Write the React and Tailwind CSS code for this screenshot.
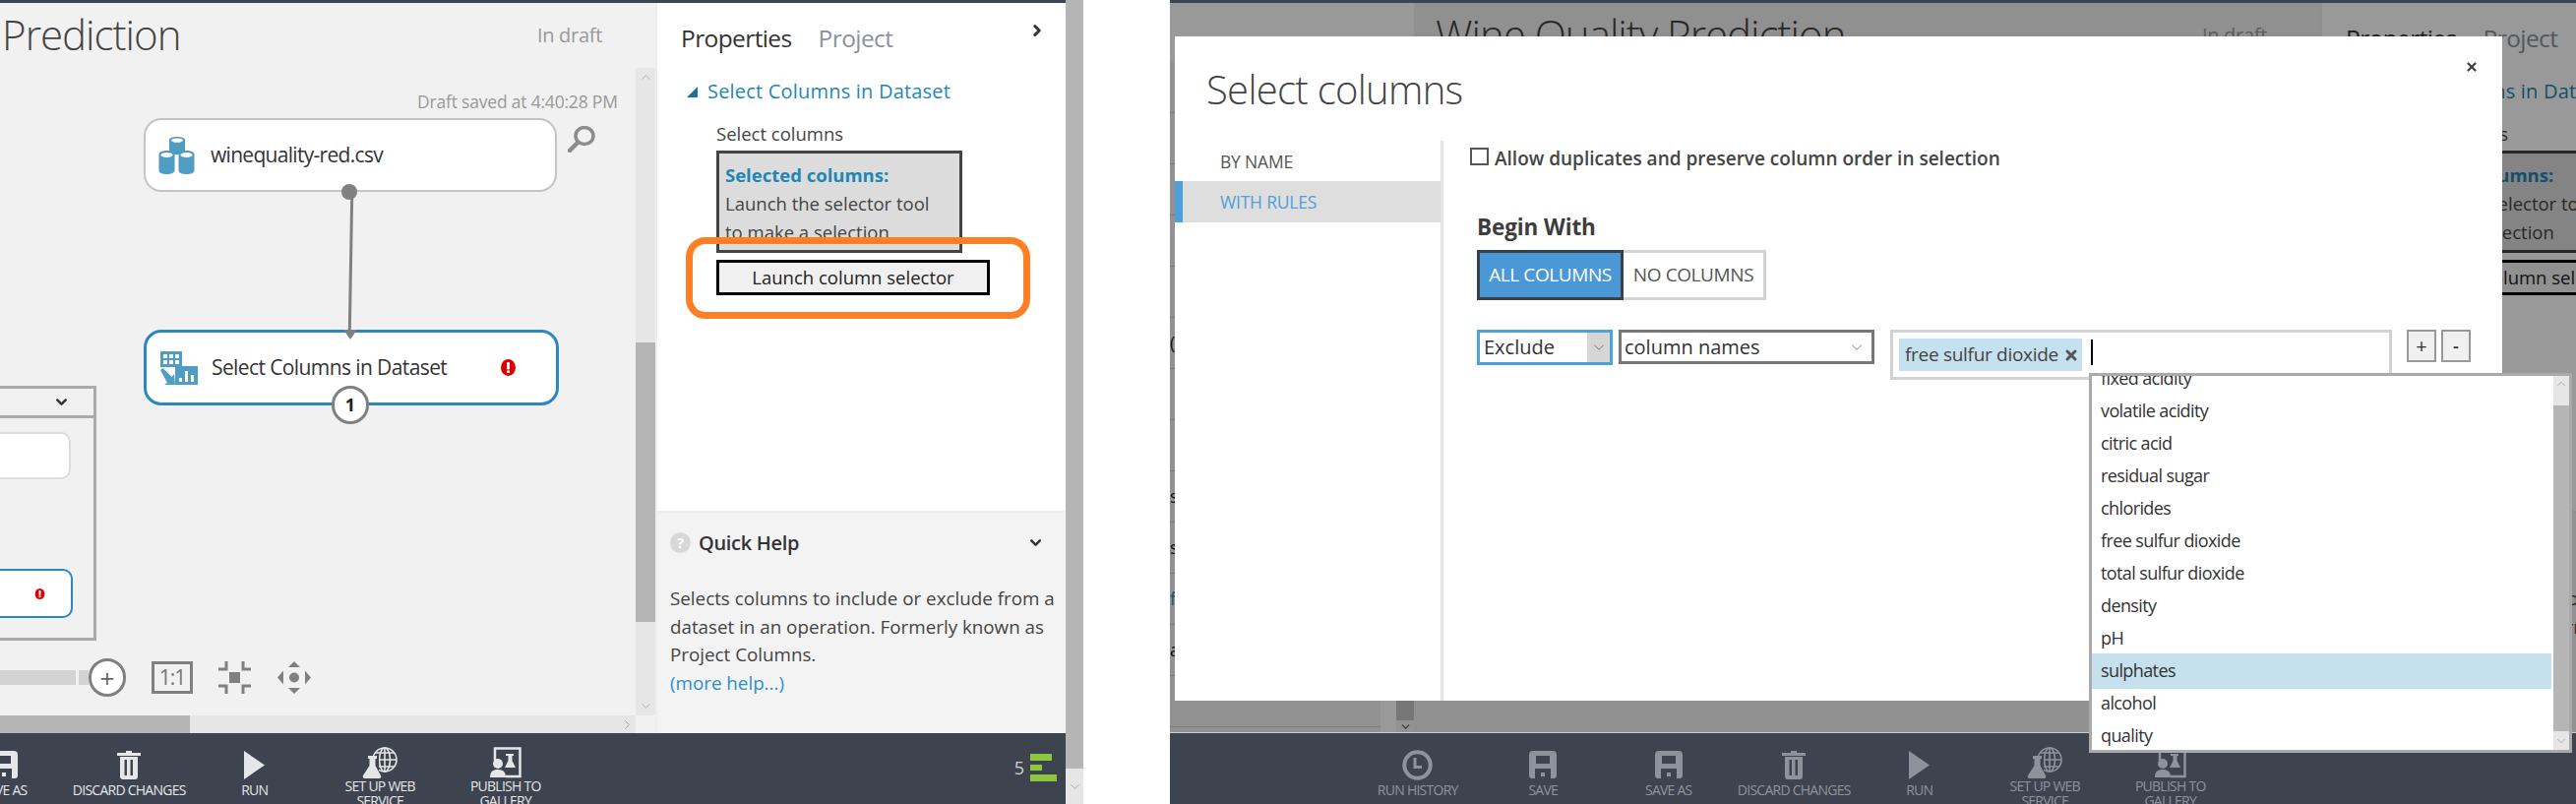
import { ChevronDown, ChevronUp, ChevronRight, X } from "lucide-react";

const paletteRows = [
  { t: "" }, { t: "" }, { t: "" }, { t: "" }, { t: "", }, { t: "(" }, { t: "" }, { t: "" },
  { t: "s" }, { t: "s" }, { t: "f", blue: true }, { t: "a" }, { t: "" },
];

const columns = ["fixed acidity", "volatile acidity", "citric acid", "residual sugar", "chlorides", "free sulfur dioxide", "total sulfur dioxide", "density", "pH", "sulphates", "alcohol", "quality"];

function DatasetIcon() {
  const cyl = (x, y) => (
    <g transform={`translate(${x} ${y})`}>
      <path d="M0 4v16c0 3 4 4 8 4s8-1 8-4V4C16 1 12 0 8 0S0 1 0 4z" fill="#4f9dc2" />
      <ellipse cx="8" cy="4.5" rx="6" ry="2.6" fill="#fff" />
    </g>
  );
  return (
    <svg width="38" height="38" viewBox="0 0 38 38">
      <path d="M11 3v12c0 2 4 3 8 3s8-1 8-3V3c0-2-4-3-8-3s-8 1-8 3z" fill="#4f9dc2" />
      <ellipse cx="19" cy="3.6" rx="6" ry="2.2" fill="#fff" />
      {cyl(0.5, 14)}{cyl(20.5, 14)}
    </svg>
  );
}

function SelectIcon() {
  return (
    <svg width="38" height="34" viewBox="0 0 38 34">
      <rect x="0" y="0" width="22" height="16" fill="#4f9dc2" />
      <g fill="#fff">
        <rect x="3" y="3" width="4" height="4" /><rect x="9" y="3" width="4" height="4" /><rect x="15" y="3" width="4" height="4" />
        <rect x="3" y="9" width="4" height="4" /><rect x="9" y="9" width="4" height="4" /><rect x="15" y="9" width="4" height="4" />
      </g>
      <path d="M0 19l2.500-2 9 9 2.500-3 1 11H4l3-2z" fill="#4f9dc2" />
      <rect x="15" y="15" width="23" height="19" fill="#4f9dc2" />
      <g fill="#fff">
        <rect x="19" y="27" width="3" height="4" /><rect x="25" y="20" width="3" height="11" /><rect x="31" y="24" width="3" height="7" />
      </g>
    </svg>
  );
}

function AlertIcon({ w = 17, h = 17 }) {
  return (
    <svg width={w} height={h} viewBox="0 0 17 17">
      <ellipse cx="8.5" cy="8.5" rx="7.5" ry="8.5" fill="#e00000" />
      <rect x="7" y="3" width="3" height="7.5" rx="1" fill="#fff" />
      <rect x="7" y="11.5" width="3" height="2.5" fill="#fff" />
    </svg>
  );
}

function ClockIcon() {
  return (
    <svg width="31" height="31" viewBox="0 0 31 31" fill="none" stroke="currentColor">
      <circle cx="15.5" cy="15.5" r="13.2" strokeWidth="4" />
      <path d="M13 8v9.5h7" strokeWidth="3" />
    </svg>
  );
}

function SaveIcon() {
  return (
    <svg width="28" height="28" viewBox="0 0 28 28">
      <path fillRule="evenodd" fill="currentColor" d="M4 0h20a4 4 0 0 1 4 4v21a3 3 0 0 1-3 3H3a3 3 0 0 1-3-3V4a4 4 0 0 1 4-4zM7 5v8h14V5zM6 18v10h16V18z" />
      <rect x="12" y="22" width="4" height="4" fill="currentColor" />
    </svg>
  );
}

function TrashIcon() {
  return (
    <svg width="24" height="29" viewBox="0 0 24 29">
      <path fill="currentColor" d="M9 0h6v2h9v3H0V2h9z" />
      <path fillRule="evenodd" fill="currentColor" d="M3 6h18v20a3 3 0 0 1-3 3H6a3 3 0 0 1-3-3zM7.500 9v16h2.500V9zM13.500 9v16H16V9z" />
    </svg>
  );
}

function PlayIcon() {
  return (
    <svg width="21" height="29" viewBox="0 0 21 29"><path fill="currentColor" d="M0 0l21 14.500L0 29z" /></svg>
  );
}

function WebIcon() {
  return (
    <svg width="36" height="32" viewBox="0 0 36 32">
      <g fill="none" stroke="currentColor" strokeWidth="1.600">
        <circle cx="23" cy="13" r="12" />
        <ellipse cx="23" cy="13" rx="5.500" ry="12" />
        <path d="M23 1v24M11 13h24M13 6h20M13 20h20" />
      </g>
      <path fill="#3d4450" d="M0 10h17v22H0z" />
      <path fill="currentColor" d="M6 9h9v3h-1.500v7L19 29a2 2 0 0 1-2 3H3a2 2 0 0 1-2-3l6.500-10v-7H6z" />
    </svg>
  );
}

function PublishIcon() {
  return (
    <svg width="32" height="32" viewBox="0 0 32 32">
      <path fill="none" stroke="currentColor" strokeWidth="2.500" d="M5 14V1.500h25.500v28.500H16" />
      <path fill="currentColor" d="M16 7h8v2h-1.500v5l3.500 7H15l3.500-7V9H16z" />
      <circle cx="8" cy="17" r="5" fill="currentColor" />
      <path fill="currentColor" d="M0 31c0-6 3-8 8-8s8 2 8 8z" />
    </svg>
  );
}

function FitIcon() {
  return (
    <svg width="33" height="33" viewBox="0 0 33 33" fill="none" stroke="#808080" strokeWidth="3">
      <path d="M8 0v8H0M25 0v8h8M8 33v-8H0M25 33v-8h8" />
      <rect x="11" y="11" width="11" height="11" fill="#808080" stroke="none" />
    </svg>
  );
}

function PanIcon() {
  return (
    <svg width="34" height="33" viewBox="0 0 34 33" fill="#808080">
      <path d="M17 0l6 6H11zM17 33l-6-6h12zM0 16.500l6-7v14zM34 16.500l-6-7v14z" />
      <circle cx="17" cy="16.500" r="5" />
    </svg>
  );
}

function ToolButton({ label, children }) {
  return (
    <div className="w-[127.5px] shrink-0 flex flex-col items-center">
      <div className="h-[36px] flex items-center justify-center">{children}</div>
      <p className="text-[14px] leading-[15px] text-center whitespace-pre-line tracking-[-0.75px]">{label}</p>
    </div>
  );
}

function Workspace({ dim }) {
  return (
    <div className="flex w-[1604px] h-[817px] shrink-0">
      <div className="w-[1586px] flex flex-col">
        <div className="h-[3px] bg-[#3d4450]" />

        <div className="flex-1 flex min-h-0">
          {/* module palette */}
          <div className="w-[248px] flex flex-col">
            <div className="h-[60px] shrink-0 bg-white" />
            <div className="flex-1 flex min-h-0 bg-[#f3f3f3]">
              <div className="w-[214px] flex flex-col overflow-hidden text-[18px] text-[#222]">
                {paletteRows.map((r, i) => (
                  <div key={i} className={`h-[52px] shrink-0 border-b border-[#cfcfcf] flex items-center ${r.blue ? "text-[#1f87b3]" : ""}`}>{r.t}</div>
                ))}
              </div>
              <div className="flex-1 bg-white flex">
                <div className="w-[16px]" />
                <div className="flex-1 flex flex-col bg-[#f3f3f3]">
                  <div className="flex-1 bg-[#c6c6c6]" />
                  <div className="h-[13px] flex items-center justify-center"><ChevronDown size={13} className="text-[#555]" /></div>
                </div>
              </div>
            </div>
          </div>

          {/* experiment canvas */}
          <div className="w-[921px] flex flex-col bg-[#f1f1f1]">
            <div className="h-[66px] flex items-start justify-between pl-[22px] pr-[54px] shrink-0">
              <h1 className="text-[42px] leading-[48px] mt-[8px] font-light text-[#444] whitespace-nowrap tracking-[-1px]">Wine Quality Prediction</h1>
              <span className="text-[20px] mt-[18px] text-[#999] tracking-[-0.3px]">In draft</span>
            </div>
            <div className="flex-1 flex min-h-0">
              <div className="w-[901px] relative overflow-hidden">
                <p className="absolute left-[679px] top-[21px] text-[17.5px] text-[#999] whitespace-nowrap tracking-[-0.2px]">Draft saved at 4:40:28 PM</p>

                <div className="absolute left-[401px] top-[51px] w-[420px] h-[75px] bg-white border-2 border-[#c4c4c4] rounded-[18px] flex items-center pl-[13px]">
                  <DatasetIcon />
                  <span className="ml-[15px] text-[21px] text-[#333] tracking-[-0.7px]">winequality-red.csv</span>
                </div>
                <svg className="absolute left-[832px] top-[59px]" width="28" height="27" viewBox="0 0 28 27" fill="none" stroke="#8c8c8c">
                  <ellipse cx="17" cy="10" rx="9" ry="8.500" strokeWidth="3.500" />
                  <path d="M10 17L2 25" strokeWidth="4.500" strokeLinecap="round" />
                </svg>

                <div className="absolute left-[610px] top-[126px] w-[3px] h-[145px] bg-[#808080] rotate-[1deg]" />
                <div className="absolute left-[610px] top-[118px] w-[16px] h-[16px] -ml-[8px] rounded-full bg-[#808080]" />

                <div className="absolute left-[401px] top-[266px] w-[422px] h-[77px] bg-white border-[3px] border-[#2a87c1] rounded-[18px] flex items-center pl-[14px] pr-[40px]">
                  <SelectIcon />
                  <span className="ml-[14px] text-[21px] text-[#333] whitespace-nowrap tracking-[-0.6px]">Select Columns in Dataset</span>
                  <div className="ml-auto"><AlertIcon /></div>
                </div>
                <svg className="absolute left-[604px] top-[266px]" width="14" height="10" viewBox="0 0 14 10"><path d="M0 0h14L7 10z" fill="#808080" /></svg>
                <div className="absolute left-[592px] top-[323px] w-[38px] h-[39px] rounded-full bg-white border-[3px] border-[#808080] flex items-center justify-center text-[18px] font-bold text-[#222]">1</div>

                {/* collapsed group */}
                <div className="absolute left-[205px] top-[323px] w-[148px] h-[259px] border-[3px] border-[#aaaaaa]">
                  <div className="h-[30px] border-b-[3px] border-[#aaaaaa] flex items-center justify-end pr-[24px]">
                    <ChevronDown size={17} strokeWidth={3.5} className="text-[#333]" />
                  </div>
                  <div className="absolute right-[23px] top-[44px] w-[100px] h-[48px] bg-white border-2 border-[#dddddd] rounded-[10px]" />
                  <div className="absolute right-[21px] top-[183px] w-[110px] h-[50px] bg-white border-2 border-[#2a87c1] rounded-[10px] flex items-center justify-end pr-[26px]">
                    <AlertIcon w={11} h={13} />
                  </div>
                </div>

                {/* zoom controls */}
                <div className="absolute left-[205px] top-[612px] w-[127px] h-[15px] bg-[#d3d3d3]" />
                <div className="absolute left-[335px] top-[612px] w-[10px] h-[15px] bg-[#d3d3d3]" />
                <div className="absolute left-[345px] top-[600px] w-[38px] h-[39px] rounded-full bg-white border-[3px] border-[#808080] flex items-center justify-center text-[26px] leading-none text-[#666]">+</div>
                <div className="absolute left-[409px] top-[603px] w-[42px] h-[33px] border-[3px] border-[#808080] flex items-center justify-center text-[21px] tracking-[-1px] text-[#777]">1:1</div>
                <div className="absolute left-[477px] top-[603px]"><FitIcon /></div>
                <div className="absolute left-[537px] top-[603px]"><PanIcon /></div>
              </div>
              <div className="w-[20px] bg-[#e6e6e6] flex flex-col relative">
                <ChevronUp size={15} strokeWidth={1} className="text-[#999] mx-auto mt-[2px]" />
                <div className="h-[279px] shrink-0 -mt-[17px]" />
                <div className="h-[284px] bg-[#b5b5b5]" />
                <div className="flex-1" />
                <ChevronDown size={15} strokeWidth={1} className="text-[#999] mx-auto mb-[2px]" />
              </div>
            </div>
            <div className="h-[18px] shrink-0 flex items-center">
              {!dim && (
                <div className="flex w-[901px] h-full bg-[#e6e6e6] items-center">
                  <div className="w-[448px] h-full bg-[#b5b5b5]" />
                  <div className="flex-1" />
                  <ChevronRight size={15} strokeWidth={1} className="text-[#777] mr-[1px]" />
                </div>
              )}
            </div>
          </div>

          {/* properties */}
          <div className="w-[417px] flex flex-col bg-white border-l-2 border-[#eeeeee]">
            <div className="flex-1 relative pl-[24px] pt-[21px]">
              <div className="flex items-start justify-between pr-[20px]">
                <div className="flex gap-[27px] text-[24.5px] leading-[30px] tracking-[-0.6px]">
                  <span className="text-[#333]">Properties</span>
                  <span className="text-[#8a929a]">Project</span>
                </div>
                <ChevronRight size={18} strokeWidth={4} className="text-[#333] mt-[-2px]" />
              </div>
              <div className="flex items-center mt-[26px] pl-[6px]">
                <svg width="11" height="11" viewBox="0 0 11 11"><path d="M11 0v11H0z" fill="#1f6f98" /></svg>
                <span className="ml-[10px] text-[20px] leading-[26px] text-[#1f87b3] whitespace-nowrap tracking-[0.2px]">Select Columns in Dataset</span>
              </div>
              <p className="ml-[36px] mt-[18px] text-[18.5px] leading-[24px] text-[#444]">Select columns</p>
              <div className="ml-[36px] mt-[5px] w-[250px] h-[104px] border-[3px] border-[#444] bg-[#dcdcdc] px-[6px] pt-[7px] text-[18.5px] leading-[29px] text-[#444] overflow-hidden whitespace-nowrap">
                <p className="font-bold text-[#1f87b3]">Selected columns:</p>
                <p>Launch the selector tool</p>
                <p>to make a selection</p>
              </div>
              <div className="ml-[36px] mt-[7px] w-[278px] h-[36px] border-[3px] border-black bg-[#f0f0f0] flex items-center justify-center text-[18.5px] text-[#222]">
                Launch column selector
              </div>
              {!dim && <div className="absolute left-[29px] top-[238px] w-[350px] h-[83px] border-[7px] border-[#ff7f27] rounded-[20px]" />}
            </div>
            <div className="h-[226px] shrink-0 bg-[#f3f3f3] border-t-2 border-[#eeeeee] pl-[13px] pr-[4px] pt-[17px]">
              <div className="flex items-center h-[27px]">
                <span className="w-[21px] h-[21px] rounded-full bg-[#d8d8d8] flex items-center justify-center text-white text-[15px] font-bold">?</span>
                <span className="ml-[8px] text-[20px] font-semibold text-[#333] tracking-[-0.3px]">Quick Help</span>
                <div className="flex-1" />
                <ChevronDown size={17} strokeWidth={3.5} className="text-[#333] mr-[18px]" />
              </div>
              <p className="mt-[29px] text-[18.8px] leading-[28.6px] text-[#444]">
                Selects columns to include or exclude from a dataset in an operation. Formerly known as Project Columns.
              </p>
              <a className="block text-[18.8px] leading-[28.6px] text-[#2a8fca]">(more help...)</a>
            </div>
          </div>
        </div>

        {/* command bar */}
        <div className={`h-[72px] shrink-0 bg-[#3d4450] flex pl-[188px] pt-[14px] relative overflow-hidden ${dim ? "text-[#8d939b]" : "text-[#e4e6e8]"}`}>
          <ToolButton label="RUN HISTORY"><ClockIcon /></ToolButton>
          <ToolButton label="SAVE"><SaveIcon /></ToolButton>
          <ToolButton label="SAVE AS"><SaveIcon /></ToolButton>
          <ToolButton label="DISCARD CHANGES"><TrashIcon /></ToolButton>
          <ToolButton label="RUN"><PlayIcon /></ToolButton>
          <ToolButton label={"SET UP WEB\nSERVICE"}><WebIcon /></ToolButton>
          <ToolButton label={"PUBLISH TO\nGALLERY"}><PublishIcon /></ToolButton>
          <div className="flex-1" />
          <div className="flex items-center mr-[9px] mb-[16px] gap-[6px]">
            <span className="text-[18px] text-[#d0d0d0]">5</span>
            <div className="w-[27px] flex flex-col gap-[4px]">
              <div className="h-[6.5px] w-[22px] bg-[#8cc63f]" />
              <div className="h-[6.5px] w-[12px] bg-[#8cc63f]" />
              <div className="h-[6.5px] w-[27px] bg-[#8cc63f]" />
            </div>
          </div>
        </div>
      </div>

      {/* browser scrollbar */}
      <div className="w-[18px] flex flex-col bg-[#e6e6e6]">
        <div className="h-[781px] bg-[#b5b5b5]" />
        <div className="flex-1 flex items-center justify-center"><ChevronDown size={15} strokeWidth={1} className="text-[#888]" /></div>
      </div>
    </div>
  );
}

function SelectColumnsDialog() {
  return (
    <div className="absolute left-[5px] top-[37px] w-[1349px] h-[675px] bg-white flex flex-col text-[#444]">
      <div className="h-[106px] shrink-0 pl-[32px] pt-[29px] flex items-start justify-between pr-[24px]">
        <h2 className="text-[40px] leading-[50px] font-light text-[#444] tracking-[-0.7px]">Select columns</h2>
        <X size={14} strokeWidth={4} className="text-[#444] mt-[-5px]" />
      </div>
      <div className="flex-1 flex min-h-0">
        <div className="w-[273px] shrink-0 border-r-[3px] border-[#e3e3e3] pt-[2px]">
          <div className="h-[39px] flex items-center pl-[46px] text-[17.5px] text-[#555] tracking-[-0.2px]">BY NAME</div>
          <div className="h-[42px] bg-[#dedede] border-l-[8px] border-[#4f9fd8] flex items-center pl-[38px] text-[17.5px] text-[#4f9fd8] tracking-[-0.2px]">WITH RULES</div>
        </div>
        <div className="flex-1 pl-[27px] pt-[7px] relative">
          <div className="flex items-start h-[18px]">
            <span className="w-[19px] h-[18px] border-2 border-[#555] bg-white" />
            <span className="ml-[6px] text-[19px] leading-[22px] font-semibold text-[#444] whitespace-nowrap">Allow duplicates and preserve column order in selection</span>
          </div>
          <h3 className="ml-[7px] mt-[48px] text-[22.5px] leading-[30px] font-bold text-[#3d3d3d] tracking-[-0.1px]">Begin With</h3>
          <div className="flex ml-[7px] mt-[8px] h-[51px]">
            <div className="w-[149px] bg-[#4a98d6] border-[3px] border-[#3a4048] flex items-center justify-center text-[19px] text-white tracking-[-0.4px]">ALL COLUMNS</div>
            <div className="w-[145px] border-[3px] border-l-0 border-[#d2d2d2] flex items-center justify-center text-[19px] text-[#555] tracking-[-0.4px]">NO COLUMNS</div>
          </div>
          <div className="flex items-start ml-[7px] mt-[30px] gap-[6px]">
            <div className="w-[138px] h-[36px] border-[3px] border-[#4ba3dc] flex items-center justify-between pl-[4px] text-[20px] text-[#333]">
              Exclude
              <span className="w-[23px] h-full bg-[#d6d6d6] flex items-center justify-center"><ChevronDown size={18} strokeWidth={1} className="text-[#555]" /></span>
            </div>
            <div className="w-[260px] h-[35px] border-[3px] border-[#777] flex items-center justify-between pl-[3px] pr-[6px] text-[20px] text-[#333]">
              column names
              <ChevronDown size={18} strokeWidth={1} className="text-[#555]" />
            </div>
            <div className="ml-[10px] w-[510px] h-[51px] border-[3px] border-[#d2d2d2] flex items-start pl-[6px] pt-[6px]">
              <div className="w-[186px] h-[33px] bg-[#c5e0ee] flex items-center pl-[6px] text-[19px] text-[#444] tracking-[-0.3px] whitespace-nowrap">
                free sulfur dioxide
                <X size={16} strokeWidth={4.5} className="ml-[5px] text-[#555]" />
              </div>
              <span className="ml-[9px] mt-[1px] w-[2px] h-[26px] bg-black" />
            </div>
            <div className="ml-[9px] w-[30px] h-[33px] border-2 border-[#999] bg-[#f0f0f0] flex items-center justify-center text-[20px] text-[#333]">+</div>
            <div className="-ml-[1px] w-[30px] h-[33px] border-2 border-[#999] bg-[#f0f0f0] flex items-center justify-center text-[18px] font-semibold text-[#333]">-</div>
          </div>
        </div>
      </div>
    </div>
  );
}

function ColumnDropdown() {
  return (
    <div className="absolute left-[934px] top-[379px] w-[491px] h-[386px] bg-white border-[3px] border-[#aaaaaa] flex z-10">
      <div className="flex-1 overflow-hidden">
        <div className="-mt-[14px] text-[18px] text-[#333] tracking-[-0.6px]">
          {columns.map(c => (
            <div key={c} className={c === "sulphates" ? "h-[36px] -my-[1.5px] bg-[#c7e0ee] flex items-center pl-[9px] relative" : "h-[33px] flex items-center pl-[9px]"}>{c}</div>
          ))}
        </div>
      </div>
      <div className="w-[16px] shrink-0 bg-[#e6e6e6] flex flex-col ml-[2px]">
        <div className="h-[30px] flex items-start justify-center pt-[1px]"><ChevronUp size={14} strokeWidth={1} className="text-[#888]" /></div>
        <div className="flex-1 bg-[#b5b5b5]" />
        <div className="h-[19px] flex items-center justify-center"><ChevronDown size={14} strokeWidth={1} className="text-[#888]" /></div>
      </div>
    </div>
  );
}

export default function App() {
  return (
    <div className="flex w-[2618px] h-[817px] bg-white overflow-hidden font-['Open_Sans',sans-serif]">
      {/* before: module properties */}
      <div className="w-[1101px] shrink-0 overflow-hidden">
        <div className="-ml-[503px] w-[1604px]"><Workspace /></div>
      </div>

      <div className="w-[88px] shrink-0" />

      {/* after: column selector dialog */}
      <div className="w-[1429px] shrink-0 relative overflow-hidden">
        <Workspace dim />
        <div className="absolute left-0 right-0 top-[3px] h-[742px] bg-black/40 border-b border-[#cccccc]" />
        <SelectColumnsDialog />
        <ColumnDropdown />
      </div>
    </div>
  );
}
